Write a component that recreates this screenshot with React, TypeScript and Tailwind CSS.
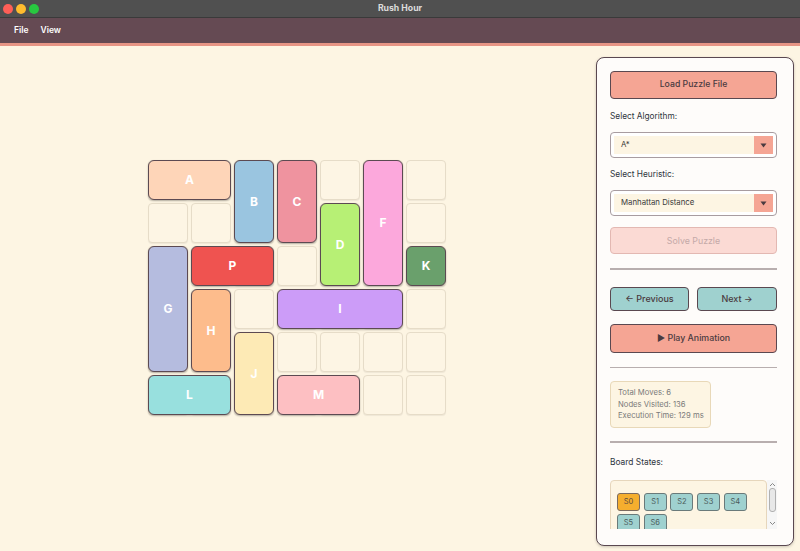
import React from "react";

const EMPTY = Array.from({ length: 42 }, (_, i) => i);

const colStart = ["col-start-1", "col-start-2", "col-start-3", "col-start-4", "col-start-5", "col-start-6", "col-start-7"];
const rowStart = ["row-start-1", "row-start-2", "row-start-3", "row-start-4", "row-start-5", "row-start-6"];

type Piece = { id: string; cls: string; bg: string };

const PIECES: Piece[] = [
  { id: "A", cls: "col-start-1 col-span-2 row-start-1", bg: "bg-[#fed5b8]" },
  { id: "B", cls: "col-start-3 row-start-1 row-span-2", bg: "bg-[#9ac5e0]" },
  { id: "C", cls: "col-start-4 row-start-1 row-span-2", bg: "bg-[#ef939f]" },
  { id: "D", cls: "col-start-5 row-start-2 row-span-2", bg: "bg-[#b7f075]" },
  { id: "F", cls: "col-start-6 row-start-1 row-span-3", bg: "bg-[#fca8dc]" },
  { id: "K", cls: "col-start-7 row-start-3", bg: "bg-[#6aa06c]" },
  { id: "P", cls: "col-start-2 col-span-2 row-start-3", bg: "bg-[#ef5350]" },
  { id: "G", cls: "col-start-1 row-start-3 row-span-3", bg: "bg-[#b5bcdf]" },
  { id: "H", cls: "col-start-2 row-start-4 row-span-2", bg: "bg-[#fdbc8c]" },
  { id: "I", cls: "col-start-4 col-span-3 row-start-4", bg: "bg-[#cc9cf8]" },
  { id: "J", cls: "col-start-3 row-start-5 row-span-2", bg: "bg-[#fdeab5]" },
  { id: "L", cls: "col-start-1 col-span-2 row-start-6", bg: "bg-[#98e0de]" },
  { id: "M", cls: "col-start-4 col-span-2 row-start-6", bg: "bg-[#fdbfc2]" },
];

function Select({ value }: { value: string }) {
  return (
    <div className="h-[26px] w-full rounded-[4px] border border-[#a89ca0] bg-white p-[3px] flex">
      <div className="flex-1 bg-[#fdf5e3] flex items-center pl-[7px] text-[7.8px] text-[#3a3a3a]">{value}</div>
      <div className="w-[19px] bg-[#f5a594] flex items-center justify-center">
        <svg width="7" height="5" viewBox="0 0 7 5"><path d="M0.5 0.5 L6.5 0.5 L3.5 4.5 Z" fill="#4a3a40" /></svg>
      </div>
    </div>
  );
}

export default function App() {
  return (
    <div className="w-[800px] h-[551px] flex flex-col bg-[#fdf5e3] overflow-hidden" style={{ fontFamily: "Inter, 'Liberation Sans', sans-serif" }}>
      {/* title bar */}
      <div className="h-[18px] bg-[#505050] border-b border-[#3a3a3a] relative flex items-center justify-center">
        <div className="absolute left-[3px] top-[4px] flex gap-[3px]">
          <div className="w-[10px] h-[10px] rounded-full bg-[#fe5f57]" />
          <div className="w-[10px] h-[10px] rounded-full bg-[#febc2e]" />
          <div className="w-[10px] h-[10px] rounded-full bg-[#28c840]" />
        </div>
        <span className="text-[8.7px] font-bold text-[#dcdcdc]">Rush Hour</span>
      </div>
      {/* menu bar */}
      <div className="h-[25px] bg-[#654a53] flex items-center gap-[12px] pl-[14px] text-[8.5px] font-semibold text-white">
        <span>File</span>
        <span>View</span>
      </div>
      <div className="h-[3px] bg-[#e79585]" />
      {/* main */}
      <div className="flex-1 flex min-h-0">
        <div className="w-[596px] pl-[148px] pt-[114px]">
          <div className="grid grid-cols-[repeat(7,40px)] grid-rows-[repeat(6,40px)] gap-[3px]">
            {EMPTY.map((i) => (
              <div
                key={i}
                className={`${colStart[i % 7]} ${rowStart[Math.floor(i / 7)]} rounded-[4px] border-[1.5px] border-[#e6dcc8] bg-[#fdf5e4] shadow-[0_1px_1px_rgba(0,0,0,0.06)]`}
              />
            ))}
            {PIECES.map((p) => (
              <div
                key={p.id}
                className={`${p.cls} ${p.bg} rounded-[6px] border-[1.5px] border-[#5c4a52] shadow-[0_1px_2px_rgba(0,0,0,0.25)] flex items-center justify-center text-white font-bold text-[12px]`}
              >
                {p.id}
              </div>
            ))}
          </div>
        </div>
        <div className="pt-[11px] pb-[5px]">
          <div className="w-[198px] h-full rounded-[8px] border-[1.5px] border-[#5a4850] bg-[#fefcfa] shadow-[0_1px_3px_rgba(0,0,0,0.2)] flex flex-col px-[13px] pt-[13px] overflow-hidden">
            <button className="h-[28px] w-[167px] shrink-0 rounded-[4px] border-[1.5px] border-[#5a4850] bg-[#f5a594] text-[8.7px] font-medium text-[#4a3a40]">Load Puzzle File</button>
            <div className="mt-[11px] text-[8.3px] text-[#2f3640] leading-[12px]">Select Algorithm:</div>
            <div className="mt-[10px] w-[167px] shrink-0"><Select value="A*" /></div>
            <div className="mt-[10px] text-[8.3px] text-[#2f3640] leading-[12px]">Select Heuristic:</div>
            <div className="mt-[10px] w-[167px] shrink-0"><Select value="Manhattan Distance" /></div>
            <button className="mt-[11px] h-[27px] w-[167px] shrink-0 rounded-[4px] border-[1.5px] border-[#e3b8b2] bg-[#fbdad4] text-[8.8px] text-[#c4a9a8]">Solve Puzzle</button>
            <div className="mt-[14px] h-[1.5px] w-[167px] shrink-0 bg-[#b8aeae]" />
            <div className="mt-[17px] flex gap-[8px] w-[167px] shrink-0">
              <button className="h-[24px] w-[79px] rounded-[4px] border-[1.5px] border-[#5a4850] bg-[#9fd1cf] text-[9px] font-medium text-[#4a3a40]">← Previous</button>
              <button className="h-[24px] w-[80px] rounded-[4px] border-[1.5px] border-[#5a4850] bg-[#9fd1cf] text-[9px] font-medium text-[#4a3a40]">Next →</button>
            </div>
            <button className="mt-[13px] h-[29px] w-[167px] shrink-0 rounded-[4px] border-[1.5px] border-[#5a4850] bg-[#f5a594] text-[8.8px] font-medium text-[#4a3a40]">▶ Play Animation</button>
            <div className="mt-[14px] h-[1.5px] w-[167px] shrink-0 bg-[#b8aeae]" />
            <div className="mt-[13px] w-[101px] h-[47px] shrink-0 rounded-[4px] border border-[#e8d8b8] bg-[#fdf5e3] px-[7px] pt-[5px] text-[7.7px] leading-[11.5px] text-[#7a7a7a] whitespace-nowrap">
              <div>Total Moves: 6</div>
              <div>Nodes Visited: 136</div>
              <div>Execution Time: 129 ms</div>
            </div>
            <div className="mt-[13px] h-[1.5px] w-[167px] shrink-0 bg-[#b8aeae]" />
            <div className="mt-[13px] text-[8.4px] text-[#2f3640] leading-[12px]">Board States:</div>
            <div className="mt-[12px] w-[167px] flex shrink-0 h-[49px] overflow-hidden">
              <div className="w-[157px] h-[60px] rounded-t-[4px] border border-[#e6d6bc] bg-[#fdf5e3] pl-[6px] pt-[12px] flex flex-wrap content-start gap-x-[3.7px] gap-y-[3px]">
                <div className="w-[23px] h-[18px] rounded-[3px] border border-[#7a6a60] bg-[#f5ae2e] flex items-center justify-center text-[7.5px] text-[#5a4a40]">S0</div>
                {["S1", "S2", "S3", "S4", "S5", "S6"].map((s) => (
                  <div key={s} className="w-[23px] h-[18px] rounded-[3px] border border-[#6a7a7a] bg-[#9fd1cf] flex items-center justify-center text-[7.5px] text-[#4a5a5a]">{s}</div>
                ))}
              </div>
              <div className="w-[10px] flex flex-col items-center bg-[#f6f6f6]">
                <svg width="7" height="5" viewBox="0 0 7 5" className="mt-[2px]"><path d="M1 4 L3.5 1.5 L6 4" stroke="#888" strokeWidth="1" fill="none" /></svg>
                <div className="mt-[1px] w-[7px] h-[24px] rounded-[3px] border border-[#b0b0b0] bg-[#e8e8e8]" />
                <svg width="7" height="5" viewBox="0 0 7 5" className="mt-[9px]"><path d="M1 1 L3.5 3.5 L6 1" stroke="#888" strokeWidth="1" fill="none" /></svg>
              </div>
            </div>
          </div>
        </div>
      </div>
    </div>
  );
}
